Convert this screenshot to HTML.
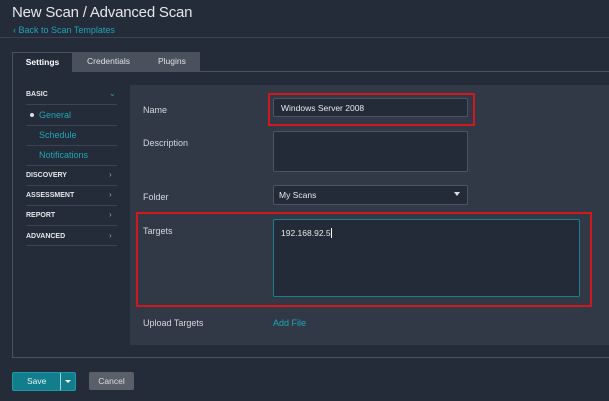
<!DOCTYPE html>
<html><head><style>
*{box-sizing:border-box;margin:0;padding:0}
body{width:609px;height:401px;background:#242b39;font-family:"Liberation Sans",sans-serif;position:relative;overflow:hidden;color:#d9dde3}
.a{position:absolute}
.lbl{font-size:9px;color:#d4d8de}
.side{font-size:7px;font-weight:bold;color:#e6e8eb}
.sl{position:absolute;left:26px;width:91px;height:1px;background:#3c4453}
.lnk{color:#20a5b5;font-size:9px}
.chev{position:absolute;left:109px;font-size:8px;color:#9aa0aa}
.inp{position:absolute;background:#232a38;border:1px solid #4c5463;border-radius:2px}
.red{position:absolute;border:2px solid #d0191c}
</style></head><body>
<div class="a" style="left:12px;top:4px;font-size:15px;letter-spacing:-0.2px;color:#e4e7ea">New Scan / Advanced Scan</div>
<div class="a lnk" style="left:13px;top:25px">‹ Back to Scan Templates</div>
<div class="a" style="left:0;top:37px;width:609px;height:1px;background:#3b4350"></div>
<div class="a" style="left:12px;top:52px;width:61px;height:20px;background:#242b39;border:1px solid #4a5260;border-bottom:none;font-size:8.5px;font-weight:bold;color:#fff;text-align:center;line-height:19px">Settings</div>
<div class="a" style="left:73px;top:52px;width:127px;height:19px;background:#4a505c;font-size:8.5px;color:#dfe2e6;line-height:19px"><span style="position:absolute;left:14px">Credentials</span><span style="position:absolute;left:85px">Plugins</span></div>
<div class="a" style="left:73px;top:71px;width:536px;height:1px;background:#4a5260"></div>
<div class="a" style="left:12px;top:72px;width:1px;height:286px;background:#4a5260"></div>
<div class="a" style="left:12px;top:357px;width:597px;height:1px;background:#4a5260"></div>
<div class="a side" style="left:26px;top:91px">BASIC</div><div class="chev" style="top:89px;color:#20a5b5">⌄</div>
<div class="sl" style="top:104px"></div>
<div class="a" style="left:30px;top:113px;width:4px;height:4px;border-radius:50%;background:#ddd"></div>
<div class="a lnk" style="left:39px;top:110px">General</div>
<div class="sl" style="top:125px"></div>
<div class="a lnk" style="left:39px;top:130px">Schedule</div>
<div class="sl" style="top:145px"></div>
<div class="a lnk" style="left:39px;top:150px">Notifications</div>
<div class="sl" style="top:165px"></div>
<div class="a side" style="left:26px;top:172px">DISCOVERY</div><div class="chev" style="top:170px">›</div>
<div class="sl" style="top:185px"></div>
<div class="a side" style="left:26px;top:192px">ASSESSMENT</div><div class="chev" style="top:190px">›</div>
<div class="sl" style="top:205px"></div>
<div class="a side" style="left:26px;top:212px">REPORT</div><div class="chev" style="top:210px">›</div>
<div class="sl" style="top:225px"></div>
<div class="a side" style="left:26px;top:233px">ADVANCED</div><div class="chev" style="top:231px">›</div>
<div class="sl" style="top:245px"></div>
<div class="a" style="left:130px;top:85px;width:479px;height:260px;background:#313947"></div>
<div class="a lbl" style="left:143px;top:105px">Name</div>
<div class="inp" style="left:273px;top:98px;width:195px;height:19px;font-size:8.5px;color:#e8eaed;padding:4px 0 0 7px">Windows Server 2008</div>
<div class="red" style="left:268px;top:93px;width:207px;height:33px"></div>
<div class="a lbl" style="left:143px;top:138px">Description</div>
<div class="inp" style="left:273px;top:131px;width:195px;height:41px"></div>
<div class="a lbl" style="left:143px;top:192px">Folder</div>
<div class="inp" style="left:273px;top:185px;width:195px;height:20px;font-size:8.5px;color:#e8eaed;padding:4px 0 0 5px">My Scans<span style="position:absolute;right:7px;top:6px;border:3px solid transparent;border-top:4px solid #ddd"></span></div>
<div class="red" style="left:136px;top:212px;width:456px;height:95px"></div>
<div class="a lbl" style="left:143px;top:226px">Targets</div>
<div class="inp" style="left:273px;top:219px;width:307px;height:78px;border-color:#1c7f8c;font-size:8.5px;color:#e8eaed;padding:8px 0 0 7px">192.168.92.5<span style="display:inline-block;width:1px;height:10px;background:#fff;vertical-align:-2px"></span></div>
<div class="a lbl" style="left:143px;top:318px">Upload Targets</div>
<div class="a lnk" style="left:273px;top:318px">Add File</div>
<div class="a" style="left:12px;top:372px;width:64px;height:19px;background:#127d8b;border:1px solid #1a9aaa;border-radius:2px;font-size:8.5px;color:#e6f3f5;line-height:17px"><span style="position:absolute;left:14px">Save</span><span style="position:absolute;left:47px;top:0;width:1px;height:17px;background:#9ad7df"></span><span style="position:absolute;left:52px;top:7px;border:3px solid transparent;border-top:3px solid #fff"></span></div>
<div class="a" style="left:89px;top:372px;width:45px;height:18px;background:#5a5f69;border-radius:2px;font-size:8.5px;color:#dcdfe3;text-align:center;line-height:18px">Cancel</div>
</body></html>
